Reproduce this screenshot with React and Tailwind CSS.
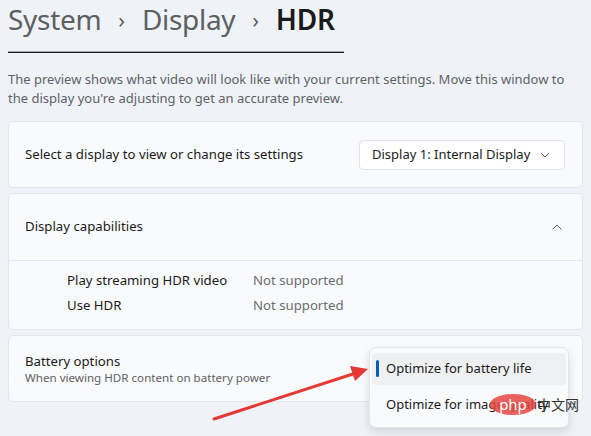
import React from 'react'

const font = { fontFamily: '"Noto Sans", "Open Sans", "Noto Sans CJK SC", sans-serif' }

function Chevron({ up = false }) {
  return (
    <svg width="12" height="12" viewBox="0 0 12 12" className="shrink-0">
      <path
        d={up ? 'M2 8 L6 4 L10 8' : 'M2.5 4.5 L6 8 L9.5 4.5'}
        fill="none"
        stroke="#5c5c5c"
        strokeWidth="1"
        strokeLinecap="round"
        strokeLinejoin="round"
      />
    </svg>
  )
}

function Card({ children, className = '' }) {
  return (
    <div className={`bg-[#f9fafc] border border-[#e3e6ea] rounded-[5px] ${className}`}>
      {children}
    </div>
  )
}

export default function App() {
  return (
    <div className="relative w-[591px] h-[436px] overflow-hidden bg-[#eff3f8] text-[#1b1b1b]" style={font}>
      {/* breadcrumb */}
      <div className="flex items-center h-[38px] px-2 text-[28px] leading-[38px] tracking-[-0.3px]">
        <span className="text-[#5d5f61]">System</span>
        <span className="mx-[17px] text-[#5d5f61] text-[22px]">›</span>
        <span className="text-[#5d5f61]">Display</span>
        <span className="mx-[17px] text-[#5d5f61] text-[22px]">›</span>
        <span className="font-semibold">HDR</span>
      </div>
      <div className="ml-2 mt-[13px] w-[336px] h-[2px] bg-[#1b1b1b] border-t border-[#a9abae]" />

      <p className="mt-[17px] px-2 text-[13px] leading-[19px] text-[#5f6166]">
        The preview shows what video will look like with your current settings. Move this window to
        the display you're adjusting to get an accurate preview.
      </p>

      <div className="mt-[13px] px-2 flex flex-col gap-[5px]">
        <Card className="h-[67px] flex items-center justify-between pl-4 pr-[17px]">
          <span className="text-[13.2px]">Select a display to view or change its settings</span>
          <div className="w-[206px] h-[30px] flex items-center justify-between pl-3 pr-[13px] bg-white border border-[#e1e3e6] rounded-[4px]">
            <span className="text-[13px]">Display 1: Internal Display</span>
            <Chevron />
          </div>
        </Card>

        <Card className="h-[137px] flex flex-col">
          <div className="h-[67px] flex items-center justify-between pl-4 pr-[19px] border-b border-[#e3e6ea]">
            <span className="text-[13.2px]">Display capabilities</span>
            <Chevron up />
          </div>
          <div className="pt-[7px] pl-[58px] flex flex-col text-[13.2px] leading-[25px]">
            <div className="flex">
              <span className="w-[186px]">Play streaming HDR video</span>
              <span className="text-[#6b6d70]">Not supported</span>
            </div>
            <div className="flex">
              <span className="w-[186px]">Use HDR</span>
              <span className="text-[#6b6d70]">Not supported</span>
            </div>
          </div>
        </Card>

        <Card className="h-[67px] flex flex-col justify-center pl-4">
          <span className="text-[13.2px] leading-[18px]">Battery options</span>
          <span className="text-[11.6px] leading-[16px] text-[#5f6166]">When viewing HDR content on battery power</span>
        </Card>
      </div>

      {/* flyout menu */}
      <div className="absolute left-[369px] top-[347px] w-[200px] h-[81px] bg-[#f9fafb] border border-[#e3e5e8] rounded-[7px] shadow-[0_4px_10px_rgba(0,0,0,0.12)] px-[2px] pt-[5px] flex flex-col gap-[4px]">
        <div className="relative h-[32px] rounded-[4px] bg-[#eef0f2] flex items-center pl-[14px] text-[13px]">
          <span className="absolute left-[4px] top-[7px] w-[3px] h-[17px] rounded-full bg-[#005fb8]" />
          Optimize for battery life
        </div>
        <div className="h-[32px] flex items-center pl-[14px] text-[13px]">Optimize for image quality</div>
      </div>

      {/* watermark */}
      <div className="absolute left-[490px] top-[394px] w-[46px] h-[21px] rounded-[50%] bg-[#e8443f]/85 flex items-center justify-center text-white text-[15px] leading-none">
        php
      </div>
      <span className="absolute left-[537px] top-[395px] text-[14px] leading-[20px] text-[#333]">中文网</span>

      {/* red arrow */}
      <svg className="absolute left-0 top-0" width="591" height="436" viewBox="0 0 591 436">
        <line x1="214" y1="419" x2="356" y2="373" stroke="#e53935" strokeWidth="3" strokeLinecap="round" />
        <path d="M368 369 L350 366 L355 381 Z" fill="#e53935" />
      </svg>
    </div>
  )
}
